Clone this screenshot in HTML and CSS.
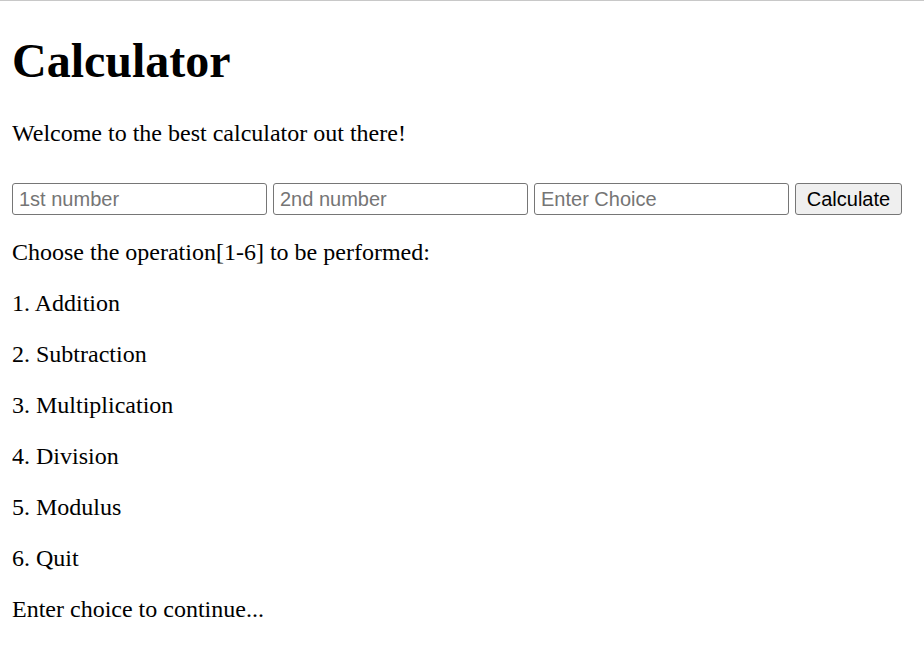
FILE: index.html
```html
<!DOCTYPE html>
<html>
<head>
<meta charset="utf-8">
<title>Calculator</title>
<link rel="stylesheet" href="styles.css">
</head>
<body>
<h1 class="title">Calculator</h1>
<p class="text">Welcome to the best calculator out there!</p>
<form class="calc-form">
  <input class="field" type="text" placeholder="1st number">
  <input class="field" type="text" placeholder="2nd number">
  <input class="field" type="text" placeholder="Enter Choice">
  <button class="btn" type="button">Calculate</button>
</form>
<p class="text">Choose the operation[1-6] to be performed:</p>
<p class="text">1. Addition</p>
<p class="text">2. Subtraction</p>
<p class="text">3. Multiplication</p>
<p class="text">4. Division</p>
<p class="text">5. Modulus</p>
<p class="text">6. Quit</p>
<p class="text">Enter choice to continue...</p>
</body>
</html>
```
FILE: styles.css
```css
html {
  border-top: 1px solid #c8c8c8;
  background: #fff;
}
body {
  margin: 0 12px;
  font-family: "Liberation Serif", "Times New Roman", serif;
  font-size: 24px;
  color: #000;
}
.title {
  font-size: 48px;
  font-weight: bold;
  margin: 32px 0 32px;
  line-height: 55px;
}
.text {
  margin: 24px 0;
  line-height: 27px;
}
.calc-form {
  display: flex;
  gap: 6px;
  margin: 36px 0 24px;
}
.calc-form + .text {
  margin-top: 24px;
}
.field {
  width: 255px;
  height: 32px;
  box-sizing: border-box;
  border: 1px solid #767676;
  border-radius: 3px;
  padding: 1px 6px;
  font-family: "Liberation Sans", Arial, sans-serif;
  font-size: 20px;
  color: #000;
  background: #fff;
  margin: 0;
}
.field::placeholder {
  color: #757575;
}
.btn {
  width: 107px;
  height: 32px;
  box-sizing: border-box;
  border: 1px solid #767676;
  border-radius: 3px;
  background: #efefef;
  font-family: "Liberation Sans", Arial, sans-serif;
  font-size: 20px;
  color: #000;
  padding: 0;
  margin: 0;
}
```
